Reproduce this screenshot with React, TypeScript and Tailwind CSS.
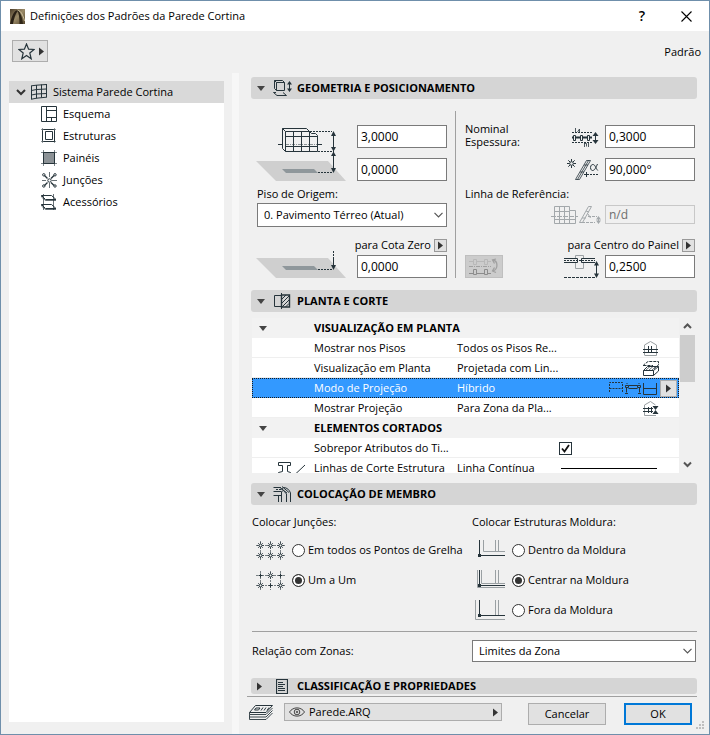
import React from "react";
import clsx from "clsx";

const INK = "#26343b";
const SOFT = "#9aa0a3";

interface DrawingProps {
  w: number;
  h: number;
  color?: string;
  className?: string;
  children: React.ReactNode;
}

function Drawing({ w, h, color = INK, className, children }: DrawingProps) {
  return (
    <svg
      width={w}
      height={h}
      viewBox={`0 0 ${w} ${h}`}
      fill="none"
      stroke={color}
      aria-hidden="true"
      className={clsx("shrink-0", className)}>
      {children}
    </svg>
  );
}

/* ---------- small glyphs ---------- */

function RightTriangle() {
  return (
    <Drawing w={5} h={9}>
      <path d="M0 0.5L5 4.5L0 8.5Z" fill="#333" stroke="none" />
    </Drawing>
  );
}

function DownTriangle() {
  return (
    <Drawing w={8} h={5}>
      <path d="M0 0H8L4 5Z" fill="#444" stroke="none" />
    </Drawing>
  );
}

function Chevron({ className }: { className?: string }) {
  return (
    <Drawing w={9} h={6} color="#555" className={className}>
      <path d="M0.5 0.8L4.5 4.8L8.5 0.8" strokeWidth="1.2" />
    </Drawing>
  );
}

function LogoIcon() {
  return (
    <Drawing w={15} h={15}>
      <defs>
        <linearGradient id="logo" x1="0" y1="0" x2="1" y2="1">
          <stop offset="0" stopColor="#4a3c28" />
          <stop offset="0.5" stopColor="#9a8a68" />
          <stop offset="1" stopColor="#574830" />
        </linearGradient>
      </defs>
      <path d="M0 0H15V15H0Z" fill="url(#logo)" stroke="none" />
      <path d="M0 15C1 9 3 4 6 1.5L8 1.5C5 5 4 10 3 15Z" fill="#2a2116" stroke="none" />
      <path d="M7 1C10 2 12 7 13 15H9.5C9.5 9 9 4 7 1Z" fill="#2f2618" stroke="none" />
      <path d="M7.5 1C11 2 13 6 14.5 12" stroke="#e0d4b4" strokeWidth="0.8" />
    </Drawing>
  );
}

/* ---------- tree icons ---------- */

function CurtainWallIcon() {
  return (
    <Drawing w={16} h={16}>
      <path d="M0.5 1.5V15.5M5.5 1V14.5M10.5 0.5V13.5M15.5 0V13.5" />
      <path d="M0.5 1.8L5.5 1.2L15.5 0.5M0.5 6.5L5.5 5.5L15.5 5M0.5 11L5.5 10L15.5 9.5M0.5 15.2L5.5 14.2L15.5 13.2" />
    </Drawing>
  );
}

function SchemeIcon() {
  return (
    <Drawing w={16} h={16}>
      <path d="M0.5 0.5H15.5V15.5H0.5ZM5.5 0.5V15.5M5.5 4.5H15.5M5.5 11.5H15.5M10.5 11.5V15.5" />
    </Drawing>
  );
}

function FramesIcon() {
  return (
    <Drawing w={16} h={16}>
      <path d="M2.5 1.5H12.5L13.5 2.5V13.5H2.5L1.5 12.5V2.5ZM4.5 3.5H11.5V11.5H4.5Z" />
      <path d="M0 1.5H15M0 13.5H15M1.5 0V15M13.5 0V15" strokeWidth="0.5" />
    </Drawing>
  );
}

function PanelsIcon() {
  return (
    <Drawing w={16} h={16}>
      <path d="M2.5 2.5H13.5V13.5H2.5Z" fill="#8c9296" />
      <path d="M0 2.5H16M0 13.5H16M2.5 0V16M13.5 0V16" strokeWidth="0.6" />
    </Drawing>
  );
}

function JunctionsIcon() {
  return (
    <Drawing w={16} h={16}>
      <path d="M8.5 0V5M8.5 11V16M1 8.5H5M11 8.5H16" strokeWidth="0.7" />
      <path d="M3.5 3.5L6.5 6.5M13 3.5L10 6.5M3.5 13.5L6.5 10.5M13 13.5L10 10.5" strokeWidth="1.4" />
      <circle cx="8.5" cy="8.5" r="1.7" />
      <circle cx="2.8" cy="2.8" r="1.2" />
      <circle cx="14" cy="2.8" r="1.2" />
      <circle cx="2.8" cy="14" r="1.2" />
      <circle cx="14" cy="14" r="1.2" />
    </Drawing>
  );
}

function AccessoriesIcon() {
  return (
    <Drawing w={16} h={16}>
      <path d="M2.5 0V16M12.5 0V16" strokeWidth="0.7" />
      <path d="M0.5 1.5H10.5L15 5.5H4.5ZM0.5 10.5H10.5L15 14.5H4.5Z" />
      <path d="M0.5 1.5V3L4.5 6.5H15M0.5 10.5V12L4.5 15.5H15" strokeWidth="0.7" />
    </Drawing>
  );
}

/* ---------- section icons ---------- */

function GeometryIcon() {
  return (
    <Drawing w={19} h={17}>
      <path d="M1.5 0.5H9.5L11.5 2.5V10.5H3.5L1.5 8.5ZM3.5 2.5H11.5M3.5 2.5V10.5M1.5 0.5L3.5 2.5" />
      <path d="M3 12.5H0.5L4 15.5H13.5L10 12.5" />
      <path d="M16.5 2V11" />
      <path d="M16.5 1L19 4.5H14ZM16.5 12L19 8.5H14Z" fill={INK} stroke="none" />
    </Drawing>
  );
}

function PlanSectionIcon() {
  return (
    <Drawing w={18} h={16}>
      <path d="M8 2.5H1.5V13.5H8" />
      <path d="M8.5 2H16.5V14H8.5Z" strokeWidth="1.4" />
      <path d="M8.5 0V16" />
      <path d="M9 6L13 2M9 10L16 3M9 14L16 7M12.5 14L16 10.5" />
    </Drawing>
  );
}

function MemberIcon() {
  return (
    <Drawing w={19} h={17}>
      <path d="M0.5 1.5H8M0.5 5.5H8" />
      <path d="M3 3.5H8" strokeDasharray="2 1" />
      <path d="M0.5 9.5H8.5M5.5 9.5V16M8.5 16V5.5L10.5 4.5L13.5 8V16M17.5 16V7C16.5 4 14 1.5 10.5 1.5L8 3.5M9 0.5L16 6.5M7 1.5L14 7" />
    </Drawing>
  );
}

function DocumentIcon() {
  return (
    <Drawing w={12} h={15}>
      <path d="M0.5 0.5H11.5V14.5H0.5Z" strokeWidth="1.2" />
      <path d="M2 3.5H7M2 5.5H9M2 7.5H7M2 9.5H9M2 11.5H9" />
    </Drawing>
  );
}

/* ---------- geometry drawings ---------- */

function Slab({ y }: { y: number }) {
  return (
    <g stroke="none" transform={`translate(0 ${y})`}>
      <path d="M0 0H72L90 20H20Z" fill="#cfcfcf" />
      <path d="M26 8H58L62 12H30Z" fill="#8f979b" />
    </g>
  );
}

function HeightDrawing() {
  return (
    <Drawing w={90} h={54}>
      <Slab y={34} />
      <path d="M29.5 4.5H53.5L55.5 6.5H59.5L61.5 8.5V24.5H29.5ZM29.5 9.5H61.5M29.5 19.5H61.5M37.5 4.5V24.5M45.5 4.5V24.5M53.5 4.5V24.5M26.5 1.5H50.5L53.5 4.5M26.5 1.5V21.5L29.5 24.5M26.5 1.5L29.5 4.5" />
      <path d="M22 17.5H27M61 17.5H66" />
      <path d="M30 17.5H61" strokeDasharray="3 1 1 1" strokeWidth="0.5" />
      <path d="M54 4.5H76M62 24.5H77M62 45.5H77" strokeDasharray="2 1" />
      <path d="M77.5 5V44" />
      <path
        d="M77.5 4L80 9H75ZM77.5 24.5L80 20H75ZM77.5 24.5L80 29H75ZM77.5 46L80 41H75Z"
        fill={INK}
        stroke="none"
      />
    </Drawing>
  );
}

function ZeroLevelDrawing() {
  return (
    <Drawing w={90} h={27}>
      <Slab y={7} />
      <path d="M77.5 0V8M62 18.5H77" strokeDasharray="2 1" />
      <path d="M77.5 8V16" />
      <path d="M77.5 19L80 14H75Z" fill={INK} stroke="none" />
    </Drawing>
  );
}

function ThicknessDrawing() {
  return (
    <Drawing w={27} h={20}>
      <path d="M0 4.5H20M0 14.5H20" strokeDasharray="2 1" />
      <path d="M3.5 0V4M5.5 4L7.5 1V4M12.5 19V15M12.5 15.5H14.5V18.5M16.5 15V19" strokeWidth="0.8" />
      <path d="M0 9.5H1M4 9.5H8M11 9.5H15M18 9.5H20" strokeWidth="2" />
      <path d="M1.5 7.5H3.5V12.5H1.5ZM8.5 7.5H10.5V12.5H8.5ZM15.5 7.5H17.5V12.5H15.5Z" />
      <path d="M23.5 6V14" />
      <path d="M23.5 4L26.5 8H20.5ZM23.5 16L26.5 12H20.5Z" fill={INK} stroke="none" />
    </Drawing>
  );
}

function AngleDrawing() {
  return (
    <Drawing w={32} h={22}>
      <circle cx="4.5" cy="4.5" r="1.8" />
      <path d="M4.5 0V2.5M4.5 6.5V9M0 4.5H2.5M6.5 4.5H9M1.3 1.3L3 3M7.7 1.3L6 3M1.3 7.7L3 6M7.7 7.7L6 6" />
      <path d="M8.5 20.5L19.5 1.5H23.5L12.5 20.5ZM10.5 20.5L21.5 1.5M13 13L17 13M17 6L21 6" strokeWidth="0.8" />
      <path d="M17 15.5H31" strokeDasharray="2 1" />
      <path d="M19.5 13V18" />
      <path d="M30.5 5C29 8 28 11.5 25.5 11.5C22.8 11.5 22.8 5.5 25.8 5.5C28.3 5.5 28.5 9 30.8 11.5" />
    </Drawing>
  );
}

function ReferenceLineDrawing() {
  return (
    <Drawing w={50} h={18} color="#a3a8ab">
      <path d="M3.5 0.5H18.5V4.5H24.5V17.5H3.5ZM3.5 5.5H18.5M3.5 13.5H24.5M8.5 0.5V17.5M13.5 0.5V17.5M18.5 4.5V17.5" />
      <path d="M0 10.5H27" strokeDasharray="5 1" />
      <path d="M28.5 16.5L37.5 0.5H40.5L31.5 16.5ZM31 12H35M35 5L38 6M37 8L39.5 12" />
      <path d="M31 16.5H44M37 10.5H46" strokeDasharray="3 1" />
      <path d="M47.5 12V16" />
      <path d="M47.5 10L50 13.5H45ZM47.5 18L50 14.5H45Z" fill="#a3a8ab" stroke="none" />
    </Drawing>
  );
}

function PanelCenterDrawing() {
  return (
    <Drawing w={36} h={23}>
      <path d="M11.5 3V0.5H19.5V3M11.5 8V13.5H19.5V8" stroke={SOFT} />
      <path d="M0 3.5H13.5V7.5H0M31 3.5H17.5V7.5H31" />
      <path d="M0 5.5H31" strokeDasharray="2 1" />
      <path d="M0 22.5H31" strokeDasharray="3 1" />
      <path d="M32.5 8V20" />
      <path d="M32.5 6L35 10.5H30ZM32.5 23L35 18.5H30Z" fill={INK} stroke="none" />
    </Drawing>
  );
}

function FlipIcon() {
  return (
    <Drawing w={30} h={19} color="#a0a0a0">
      <path d="M0 4.5H4M8 4.5H15M19 4.5H22M4.5 2.5H7.5V7.5H4.5ZM15.5 2.5H18.5V7.5H15.5Z" stroke="#b8b8b8" />
      <path d="M0 9.5H22" strokeDasharray="4 1 1 1" />
      <path d="M0 16.5H4M8 16.5H15M19 16.5H22M4.5 12.5H7.5V17.5H4.5ZM15.5 12.5H18.5V17.5H15.5Z" stroke="#8c8c8c" />
      <path d="M24 3C29 4 29.5 12 24 14M27 2L23.5 3L25.5 6.5M25.5 10.5L23.5 14L27 15.5" strokeWidth="1.3" />
    </Drawing>
  );
}

/* ---------- property list icons ---------- */

function StoriesIcon() {
  return (
    <Drawing w={15} h={15}>
      <path d="M1.5 14V4L7.5 0.5L13.5 4V14.5H1.5" stroke={SOFT} />
      <path d="M0 8.5H15M0 11.5H15M5.5 5V12M8.5 5V12" />
    </Drawing>
  );
}

function ProjectedIcon() {
  return (
    <Drawing w={16} h={15}>
      <path d="M0.5 5V4L5 0.5H15.5V4L11 7.5M0.5 4.5H10" strokeDasharray="3 1" />
      <path d="M0.5 9.5H10.5V14.5H0.5ZM0.5 9.5L4.5 5.5H15.5L10.5 9.5M15.5 5.5V10L10.5 14.5" />
      <path d="M3 9L7 5.5M6 9L10 5.5M9 9L13 5.5" strokeWidth="0.7" />
    </Drawing>
  );
}

function ProjectionModeIcon() {
  return (
    <Drawing w={48} h={13}>
      <path d="M0.5 10V0.5H13.5V10M0.5 6.5H13.5" strokeDasharray="2 1" />
      <path d="M16.5 3.5H19.5V5.5H16.5ZM28.5 3.5H31.5V5.5H28.5ZM17.5 5.5V10.5M30.5 5.5V10.5M16 11.5H19M29 11.5H32M19.5 3.5H28.5M19.5 6.5H28.5" />
      <path d="M17.5 1.5H18.5M29.5 1.5H30.5" />
      <path d="M34.5 1V12.5H47.5V1M34.5 6.5H47.5" />
    </Drawing>
  );
}

function ZoneProjectionIcon() {
  return (
    <Drawing w={16} h={15}>
      <path d="M1.5 14.5V4L7.5 0.5L12.5 4M1.5 14.5H13" stroke={SOFT} />
      <path d="M0 7.5H10M0 10.5H10M5.5 6V12M8.5 6V12" />
      <path d="M10 5.5H15M10 12.5H15" />
      <path d="M12.5 9L15.5 5H9.5ZM12.5 9L15.5 13H9.5Z" fill={INK} stroke="none" />
    </Drawing>
  );
}

function ProfileLineIcon() {
  return (
    <Drawing w={28} h={12}>
      <path d="M0.5 0.5H12.5V3.5H9.5V9.5L12.5 10.5V12M0.5 0.5V3.5H4.5V9.5L0.5 10.5V12" />
      <path d="M18 11.5L27 3" />
    </Drawing>
  );
}

/* ---------- member placement icons ---------- */

function GridPoint({ x, y, star }: { x: number; y: number; star: boolean }) {
  return (
    <g transform={`translate(${x} ${y})`}>
      {star ? (
        <>
          <path d="M-2.5 -2.5L2.5 2.5M2.5 -2.5L-2.5 2.5M0 -3.5V3.5M-3.5 0H3.5" strokeWidth="0.7" />
          <circle r="1.4" fill="#f0f0f0" strokeWidth="0.9" />
        </>
      ) : (
        <path d="M0 -2V2M-2 0H2" />
      )}
    </g>
  );
}

function GridPointsIcon({ stars }: { stars: boolean[] }) {
  return (
    <Drawing w={29} h={19}>
      <path d="M4.5 0V19M14.5 0V19M24.5 0V19M0 4.5H29M0 14.5H29" strokeDasharray="2 1" strokeWidth="0.6" />
      {stars.map((star, i) => (
        <GridPoint key={i} x={4.5 + (i % 3) * 10} y={i < 3 ? 4.5 : 14.5} star={star} />
      ))}
    </Drawing>
  );
}

function FrameIcon({ gray }: { gray: string }) {
  return (
    <Drawing w={30} h={20}>
      <path d={gray} stroke={SOFT} />
      <path d="M4.5 0V15.5H30" />
      <path d="M3 14H6V17H3Z" fill={INK} stroke="none" />
    </Drawing>
  );
}

function LayersIcon() {
  return (
    <Drawing w={26} h={15}>
      <path d="M7.5 0.5H24.5L18 7.5H1.5Z" />
      <path d="M1.5 7.5V9.5H18L24.5 3M1.5 9.5V12H18L24.5 5.5M1.5 12V14.5H18L24.5 8" strokeWidth="0.9" />
      <path d="M8 3H12L10.5 5H6.5ZM15 2.5L13 5.5M18 2.5L16 5.5M21 2.5L19 5.5" />
    </Drawing>
  );
}

function EyeIcon() {
  return (
    <Drawing w={16} h={10} color="#444">
      <path d="M0.5 5C4 -0.5 12 -0.5 15.5 5C12 10.5 4 10.5 0.5 5Z" />
      <circle cx="8" cy="5" r="2.8" />
      <circle cx="8" cy="5" r="0.8" />
    </Drawing>
  );
}

/* ---------- controls ---------- */

interface SectionHeaderProps {
  title: string;
  icon: React.ElementType;
  open?: boolean;
  className?: string;
}

function SectionHeader({ title, icon: Icon, open = true, className }: SectionHeaderProps) {
  return (
    <button
      type="button"
      aria-expanded={open}
      className={clsx(
        "flex w-full shrink-0 items-center rounded-[3px] bg-[#d5d5d5] pl-[6px] text-left font-bold",
        open ? "h-[22px]" : "h-4",
        className
      )}>
      <span className="flex w-[14px] shrink-0 justify-start">{open ? <DownTriangle /> : <RightTriangle />}</span>
      <span className="flex w-[26px] shrink-0 justify-center pr-1">
        <Icon />
      </span>
      <h2>{title}</h2>
    </button>
  );
}

interface NumberFieldProps {
  label: string;
  value: string;
  disabled?: boolean;
}

function NumberField({ label, value, disabled }: NumberFieldProps) {
  return (
    <input
      type="text"
      aria-label={label}
      defaultValue={value}
      disabled={disabled}
      className={clsx(
        "w-[90px] shrink-0 border px-[3px] text-[12px]",
        disabled ? "h-[19px] border-[#c8c8c8] bg-[#f0f0f0] text-[#6d6d6d]" : "h-[23px] border-[#7a7a7a] bg-white"
      )}
    />
  );
}

interface SelectFieldProps {
  id: string;
  value: string;
  className?: string;
}

function SelectField({ id, value, className }: SelectFieldProps) {
  return (
    <div className={clsx("relative", className)}>
      <select id={id} className="h-full w-full appearance-none border border-[#7a7a7a] bg-white pl-[6px]">
        <option>{value}</option>
      </select>
      <Chevron className="pointer-events-none absolute top-1/2 right-1 -translate-y-1/2" />
    </div>
  );
}

function LevelLabel({ children }: { children: string }) {
  return (
    <div className="flex h-[14px] items-center justify-end gap-[3px] whitespace-nowrap">
      <span>{children}</span>
      <button
        type="button"
        aria-label={children}
        className="flex size-[13px] shrink-0 items-center justify-center border border-[#999] bg-[#e1e1e1]">
        <RightTriangle />
      </button>
    </div>
  );
}

interface RadioRowProps {
  group: string;
  label: string;
  checked?: boolean;
  icon: React.ReactNode;
}

function RadioRow({ group, label, checked, icon }: RadioRowProps) {
  return (
    <label className="flex h-[30px] items-center whitespace-nowrap">
      {icon}
      <input
        type="radio"
        name={group}
        defaultChecked={checked}
        className="mr-[3px] ml-[7px] size-[13px] appearance-none rounded-full border border-[#333] bg-white checked:bg-[#333] checked:shadow-[inset_0_0_0_2px_white]"
      />
      {label}
    </label>
  );
}

/* ---------- panels ---------- */

const treeItems = [
  { name: "Esquema", icon: SchemeIcon },
  { name: "Estruturas", icon: FramesIcon },
  { name: "Painéis", icon: PanelsIcon },
  { name: "Junções", icon: JunctionsIcon },
  { name: "Acessórios", icon: AccessoriesIcon }
];

function Tree() {
  return (
    <nav className="mt-2 mb-3 ml-2 w-[215px] shrink-0 bg-white">
      <button type="button" className="flex h-[22px] w-full items-center bg-[#d9d9d9] pl-[7px]">
        <Drawing w={10} h={7} color="#333">
          <path d="M1 1L5 5L9 1" strokeWidth="2" />
        </Drawing>
        <span className="mr-[6px] ml-[5px]">
          <CurtainWallIcon />
        </span>
        Sistema Parede Cortina
      </button>
      <ul>
        {treeItems.map(({ name, icon: Icon }) => (
          <li key={name}>
            <button type="button" className="flex h-[22px] w-full items-center gap-[6px] pl-8">
              <Icon />
              {name}
            </button>
          </li>
        ))}
      </ul>
    </nav>
  );
}

function GeometrySection() {
  return (
    <div className="mt-3 flex">
      <div className="w-[205px] shrink-0 border-r border-[#a0a0a0] pt-[14px] pr-2 pl-[5px]">
        <div className="flex items-end justify-between">
          <HeightDrawing />
          <div className="flex flex-col gap-[10px]">
            <NumberField label="Altura" value="3,0000" />
            <NumberField label="Elevação da base" value="0,0000" />
          </div>
        </div>
        <label htmlFor="story" className="mt-[5px] ml-px block">
          Piso de Origem:
        </label>
        <SelectField id="story" value="0. Pavimento Térreo (Atual)" className="mt-px ml-px h-6" />
        <div className="mt-[11px] flex items-end justify-between">
          <ZeroLevelDrawing />
          <div className="flex w-[90px] flex-col gap-[3px]">
            <LevelLabel>para Cota Zero</LevelLabel>
            <NumberField label="Cota Zero" value="0,0000" />
          </div>
        </div>
      </div>

      <div className="flex-1 pt-[11px] pr-[2px] pl-[9px]">
        <div className="flex items-end gap-[6px]">
          <p className="flex-1 self-start leading-[13px]">
            Nominal
            <br />
            Espessura:
          </p>
          <ThicknessDrawing />
          <NumberField label="Nominal Espessura" value="0,3000" />
        </div>
        <div className="mt-[10px] flex items-center justify-end gap-[6px]">
          <AngleDrawing />
          <NumberField label="Ângulo" value="90,000°" />
        </div>
        <p className="mt-[5px]">Linha de Referência:</p>
        <div className="mt-[3px] flex items-center justify-end gap-1">
          <ReferenceLineDrawing />
          <NumberField label="Linha de Referência" value="n/d" disabled />
        </div>
        <div className="mt-[14px] mb-[3px]">
          <LevelLabel>para Centro do Painel</LevelLabel>
        </div>
        <div className="flex items-center gap-[5px]">
          <button
            type="button"
            disabled
            aria-label="Inverter"
            className="mr-auto flex h-[23px] w-[38px] items-center justify-center border border-[#bfbfbf] bg-[#ccc]">
            <FlipIcon />
          </button>
          <PanelCenterDrawing />
          <NumberField label="Centro do Painel" value="0,2500" />
        </div>
      </div>
    </div>
  );
}

interface PropertyRowProps {
  name: string;
  value?: string;
  lead?: React.ReactNode;
  selected?: boolean;
  children?: React.ReactNode;
}

function PropertyRow({ name, value, lead, selected, children }: PropertyRowProps) {
  return (
    <tr
      className={clsx(
        "h-5 leading-[18px]",
        selected
          ? "bg-[#3399ff] text-white outline-1 -outline-offset-1 outline-[#1b1b1b] outline-dotted"
          : "bg-white shadow-[inset_0_-1px_0_#efefef]"
      )}>
      <td>{lead}</td>
      <td>{name}</td>
      <td>{value}</td>
      <td>{children}</td>
    </tr>
  );
}

function GroupRow({ name }: { name: string }) {
  return (
    <tr className="h-5 bg-[#f2f2f2] text-left leading-[18px]">
      <td className="pl-[7px]">
        <DownTriangle />
      </td>
      <th colSpan={3} className="font-bold">
        {name}
      </th>
    </tr>
  );
}

function PropertyList() {
  return (
    <div className="mt-[6px] flex h-[155px] shrink-0 pr-[2px] pl-px">
      <div className="flex-1 overflow-hidden">
        <table className="w-full table-fixed whitespace-nowrap">
          <colgroup>
            <col className="w-[62px]" />
            <col className="w-[143px]" />
            <col className="w-[104px]" />
            <col />
          </colgroup>
          <tbody>
            <GroupRow name="VISUALIZAÇÃO EM PLANTA" />
            <PropertyRow name="Mostrar nos Pisos" value="Todos os Pisos Re...">
              <div className="flex justify-end pr-[21px]">
                <StoriesIcon />
              </div>
            </PropertyRow>
            <PropertyRow name="Visualização em Planta" value="Projetada com Lin...">
              <div className="flex justify-end pr-5">
                <ProjectedIcon />
              </div>
            </PropertyRow>
            <PropertyRow name="Modo de Projeção" value="Híbrido" selected>
              <div className="flex items-center justify-end gap-[3px] pr-[2px]">
                <ProjectionModeIcon />
                <button
                  type="button"
                  aria-label="Modo de Projeção"
                  className="flex size-[17px] items-center justify-center border border-[#adadad] bg-[#e1e1e1]">
                  <RightTriangle />
                </button>
              </div>
            </PropertyRow>
            <PropertyRow name="Mostrar Projeção" value="Para Zona da Pla...">
              <div className="flex justify-end pr-5">
                <ZoneProjectionIcon />
              </div>
            </PropertyRow>
            <GroupRow name="ELEMENTOS CORTADOS" />
            <tr className="h-5 bg-white leading-[18px] shadow-[inset_0_-1px_0_#efefef]">
              <td />
              <td>
                <label htmlFor="override">Sobrepor Atributos do Ti...</label>
              </td>
              <td colSpan={2}>
                <div className="relative ml-[102px] size-[13px]">
                  <input
                    id="override"
                    type="checkbox"
                    defaultChecked
                    className="block size-[13px] appearance-none border border-[#26343b] bg-white"
                  />
                  <Drawing w={13} h={13} color="#111" className="pointer-events-none absolute top-0 left-0">
                    <path d="M3 6.5L5.5 9.5L10 3" strokeWidth="1.8" />
                  </Drawing>
                </div>
              </td>
            </tr>
            <PropertyRow
              name="Linhas de Corte Estrutura"
              value="Linha Contínua"
              lead={
                <div className="pl-[26px]">
                  <ProfileLineIcon />
                </div>
              }>
              <div className="mr-[22px] h-px bg-black" />
            </PropertyRow>
          </tbody>
        </table>
      </div>
      <div className="ml-px flex w-[15px] shrink-0 flex-col items-center">
        <button type="button" aria-label="Subir" className="flex h-[17px] items-center">
          <Drawing w={9} h={7} color="#555">
            <path d="M1 5L4.5 1.5L8 5" strokeWidth="2" />
          </Drawing>
        </button>
        <div className="h-[47px] w-full bg-[#cdcdcd]" />
        <button type="button" aria-label="Descer" className="mt-auto flex h-[17px] items-center">
          <Drawing w={9} h={7} color="#555">
            <path d="M1 1.5L4.5 5L8 1.5" strokeWidth="2" />
          </Drawing>
        </button>
      </div>
    </div>
  );
}

function MemberSection() {
  return (
    <div className="mt-[9px] flex pl-px">
      <fieldset className="w-[220px] shrink-0">
        <legend className="mb-[5px]">Colocar Junções:</legend>
        <div className="pl-1">
          <RadioRow
            group="junctions"
            label="Em todos os Pontos de Grelha"
            icon={<GridPointsIcon stars={[true, true, true, true, true, true]} />}
          />
          <RadioRow
            group="junctions"
            label="Um a Um"
            checked
            icon={<GridPointsIcon stars={[false, true, false, true, false, true]} />}
          />
        </div>
      </fieldset>
      <fieldset className="flex-1">
        <legend className="mb-[5px]">Colocar Estruturas Moldura:</legend>
        <div className="pl-[3px]">
          <RadioRow
            group="boundary"
            label="Dentro da Moldura"
            icon={<FrameIcon gray="M8.5 0V11.5H30M20.5 0V11M23.5 0V11" />}
          />
          <RadioRow
            group="boundary"
            label="Centrar na Moldura"
            checked
            icon={<FrameIcon gray="M2.5 0V17.5H30M6.5 0V13.5H30M20.5 0V13M23.5 0V13" />}
          />
          <RadioRow
            group="boundary"
            label="Fora da Moldura"
            icon={<FrameIcon gray="M0.5 0V19.5H30M20.5 0V15M23.5 0V15" />}
          />
        </div>
      </fieldset>
    </div>
  );
}

function Footer() {
  return (
    <div className="mt-[2px] ml-[-4px] flex items-start border-t border-[#a0a0a0] pt-[6px] pb-[9px] pl-px">
      <span className="mt-[2px] mr-[10px]">
        <LayersIcon />
      </span>
      <button
        type="button"
        className="flex h-[18px] flex-1 items-center gap-1 border border-[#adadad] bg-[#e1e1e1] pr-[3px] pl-1">
        <EyeIcon />
        <span>Parede.ARQ</span>
        <span className="ml-auto">
          <RightTriangle />
        </span>
      </button>
      <button type="button" className="ml-[26px] h-[22px] w-[78px] border border-[#adadad] bg-[#e1e1e1]">
        Cancelar
      </button>
      <button type="button" className="mr-[5px] ml-[18px] h-[22px] w-[68px] border-2 border-[#0078d7] bg-[#e1e1e1]">
        OK
      </button>
    </div>
  );
}

export default function App() {
  return (
    <div className="relative flex min-h-screen flex-col border border-[#6f8fab] bg-[#f0f0f0] font-['Open_Sans',sans-serif] text-[11px] leading-4 text-black">
      <header className="flex h-[30px] items-center bg-white pr-[17px] pl-[9px]">
        <LogoIcon />
        <h1 className="ml-[5px] flex-1">Definições dos Padrões da Parede Cortina</h1>
        <button type="button" aria-label="Ajuda" className="mr-9 text-[14px] font-semibold">
          ?
        </button>
        <button type="button" aria-label="Fechar">
          <Drawing w={11} h={11} color="#000">
            <path d="M0.5 0.5L10.5 10.5M10.5 0.5L0.5 10.5" strokeWidth="1.1" />
          </Drawing>
        </button>
      </header>

      <div className="flex h-[42px] items-center justify-between pr-2 pl-[11px]">
        <button
          type="button"
          aria-label="Favoritos"
          className="mb-[2px] flex h-[22px] w-9 items-center justify-between border border-[#adadad] bg-[#e1e1e1] pr-[3px] pl-[5px]">
          <Drawing w={17} h={17}>
            <path
              d="M8.5 1L10.6 6.2L16 6.5L11.8 10L13.2 15.8L8.5 12.5L3.8 15.8L5.2 10L1 6.5L6.4 6.2Z"
              strokeWidth="1.2"
            />
          </Drawing>
          <RightTriangle />
        </button>
        <span>Padrão</span>
      </div>

      <div className="flex flex-1">
        <Tree />
        <div className="ml-2 w-[7px] shrink-0 bg-[#f7f7f7]" />
        <main className="flex min-w-0 flex-1 flex-col px-3">
          <SectionHeader title="GEOMETRIA E POSICIONAMENTO" icon={GeometryIcon} className="mt-1" />
          <GeometrySection />
          <SectionHeader title="PLANTA E CORTE" icon={PlanSectionIcon} className="mt-3" />
          <PropertyList />
          <SectionHeader title="COLOCAÇÃO DE MEMBRO" icon={MemberIcon} className="mt-[10px]" />
          <MemberSection />
          <div className="mt-[6px] ml-px flex items-center border-t border-[#a0a0a0] pt-2">
            <label htmlFor="zones" className="w-[220px] shrink-0">
              Relação com Zonas:
            </label>
            <SelectField id="zones" value="Limites da Zona" className="mr-px h-[22px] flex-1" />
          </div>
          <SectionHeader title="CLASSIFICAÇÃO E PROPRIEDADES" icon={DocumentIcon} open={false} className="mt-4" />
          <Footer />
        </main>
      </div>

      <Drawing w={9} h={9} className="absolute right-1 bottom-1">
        <path
          d="M6 0H8V2H6ZM3 3H5V5H3ZM6 3H8V5H6ZM0 6H2V8H0ZM3 6H5V8H3ZM6 6H8V8H6Z"
          fill="#bfbfbf"
          stroke="none"
        />
      </Drawing>
    </div>
  );
}
